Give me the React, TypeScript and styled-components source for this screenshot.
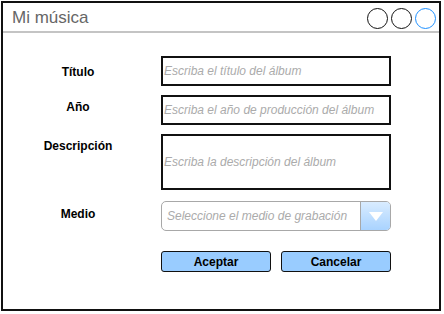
import React from 'react';
import styled, { createGlobalStyle } from 'styled-components';

const GlobalStyle = createGlobalStyle`
  html, body {
    margin: 0;
    padding: 0;
    background: #ffffff;
    font-family: 'Liberation Sans', Arial, sans-serif;
  }
`;

function App() {
  return (
    <>
      <GlobalStyle />
      <Page>
        <Window>
          <TitleBar>
            <Title>Mi música</Title>
            <Controls>
              <Circle />
              <Circle />
              <Circle $active />
            </Controls>
          </TitleBar>
          <Form>
            <Label $offset={9}>Título</Label>
            <TextBox>
              <Placeholder>Escriba el título del álbum</Placeholder>
            </TextBox>

            <Label $offset={5}>Año</Label>
            <TextBox>
              <Placeholder>Escriba el año de producción del álbum</Placeholder>
            </TextBox>

            <Label $offset={5}>Descripción</Label>
            <TextBox $tall>
              <Placeholder>Escriba la descripción del álbum</Placeholder>
            </TextBox>

            <Label $offset={6} $top={2}>Medio</Label>
            <Select $top={2}>
              <SelectText>Seleccione el medio de grabación</SelectText>
              <SelectArrow>
                <svg width="16" height="11" viewBox="0 0 16 11">
                  <polygon points="1,1 15,1 8,10" fill="#ffffff" />
                </svg>
              </SelectArrow>
            </Select>

            <span />
            <Buttons>
              <Button>Aceptar</Button>
              <Button>Cancelar</Button>
            </Buttons>
          </Form>
        </Window>
      </Page>
    </>
  );
}

export default App;

const Page = styled.div`
  padding: 1px;
`;

const Window = styled.div`
  width: 436px;
  height: 306px;
  border: 2px solid #111;
  display: flex;
  flex-direction: column;
`;

const TitleBar = styled.div`
  height: 28px;
  border-bottom: 2px solid #c4c4c4;
  display: flex;
  align-items: center;
  justify-content: space-between;
  padding: 0 3px 0 9px;
`;

const Title = styled.div`
  font-size: 17px;
  color: #666666;
  margin-top: 1px;
`;

const Controls = styled.div`
  display: flex;
  gap: 3px;
  margin-top: 2px;
`;

const Circle = styled.div<{ $active?: boolean }>`
  width: 19px;
  height: 19px;
  border-radius: 50%;
  border: 1.5px solid ${(p) => (p.$active ? '#1e90ff' : '#111')};
`;

const Form = styled.div`
  display: grid;
  grid-template-columns: 150px 230px;
  column-gap: 8px;
  row-gap: 9px;
  padding-top: 23px;
  font-size: 12px;
`;

const Label = styled.div<{ $offset: number; $top?: number }>`
  text-align: center;
  font-weight: bold;
  color: #000;
  padding-top: ${(p) => p.$offset}px;
  margin-top: ${(p) => p.$top || 0}px;
`;

const TextBox = styled.div<{ $tall?: boolean }>`
  height: ${(p) => (p.$tall ? 52 : 26)}px;
  border: 2px solid #111;
  display: flex;
  align-items: center;
  padding-left: 1px;
`;

const Placeholder = styled.span`
  font-style: italic;
  color: #ababab;
  font-size: 12px;
`;

const Select = styled.div<{ $top?: number }>`
  height: 28px;
  margin-top: ${(p) => p.$top || 0}px;
  border: 1px solid #a8a8a8;
  border-radius: 5px;
  display: flex;
  overflow: hidden;
`;

const SelectText = styled.span`
  flex: 1;
  display: flex;
  align-items: center;
  padding-left: 5px;
  font-style: italic;
  color: #ababab;
  font-size: 12px;
`;

const SelectArrow = styled.div`
  width: 29px;
  border-left: 1px solid #a8a8a8;
  background: linear-gradient(to bottom, #d9ecff, #a9d3ff);
  display: flex;
  align-items: center;
  justify-content: center;
`;

const Buttons = styled.div`
  display: flex;
  gap: 10px;
  margin-top: 11px;
`;

const Button = styled.button`
  width: 110px;
  height: 21px;
  padding: 0;
  background: #99ccff;
  border: 1px solid #111;
  border-radius: 3px;
  font-family: 'Liberation Sans', Arial, sans-serif;
  font-weight: bold;
  font-size: 12px;
  color: #000;
`;
